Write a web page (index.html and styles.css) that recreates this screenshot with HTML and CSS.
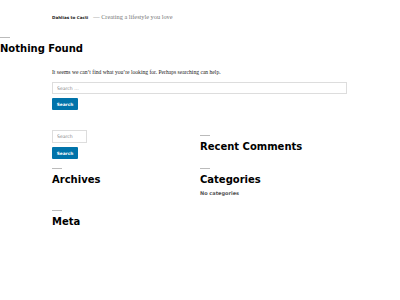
FILE: index.html
```html
<!DOCTYPE html>
<html lang="en">
<head>
    <meta charset="UTF-8">
    <meta name="viewport" content="width=device-width, initial-scale=1.0">
    <title>Dahlias to Cacti</title>
    <link rel="stylesheet" href="styles.css">
</head>
<body>
    <header class="site-header">
        <span class="site-title">Dahlias to Cacti</span>
        <span class="site-desc">— Creating a lifestyle you love</span>
    </header>

    <main class="site-main">
        <div class="rule"></div>
        <h1 class="page-title">Nothing Found</h1>

        <div class="page-content">
            <p>It seems we can’t find what you’re looking for. Perhaps searching can help.</p>
            <form class="search-form">
                <input type="search" class="search-field" placeholder="Search …">
                <button type="button" class="search-submit">Search</button>
            </form>
        </div>
    </main>

    <aside class="widget-area">
        <div class="widget-column">
            <form class="search-form widget-search">
                <input type="search" class="search-field small" placeholder="Search …">
                <button type="button" class="search-submit">Search</button>
            </form>

            <section class="widget widget-archives">
                <div class="rule"></div>
                <h2 class="widget-title">Archives</h2>
            </section>

            <section class="widget widget-meta">
                <div class="rule"></div>
                <h2 class="widget-title">Meta</h2>
            </section>
        </div>

        <div class="widget-column">
            <section class="widget widget-comments">
                <div class="rule"></div>
                <h2 class="widget-title">Recent Comments</h2>
            </section>

            <section class="widget widget-categories">
                <div class="rule"></div>
                <h2 class="widget-title">Categories</h2>
                <div class="widget-empty">No categories</div>
            </section>
        </div>
    </aside>
</body>
</html>
```

FILE: styles.css
```css
body {
    margin: 0;
    background: #fff;
    color: #111;
    font-family: "Liberation Serif", serif;
}

.site-header {
    padding: 9px 52px 0;
    height: 10px;
    line-height: 10px;
    white-space: nowrap;
}

.site-title {
    font-family: "DejaVu Sans", sans-serif;
    font-weight: bold;
    font-size: 4.1px;
    color: #222;
}

.site-desc {
    margin-left: 1px;
    font-size: 6.3px;
    color: #777;
}

.site-main {
    margin-top: 18px;
}

.rule {
    width: 10px;
    height: 1px;
    background: #bbb;
}

.page-title {
    margin: 5px 0 0;
    font-family: "DejaVu Sans", sans-serif;
    font-weight: bold;
    font-size: 10px;
    line-height: 12px;
    color: #000;
}

.page-content {
    padding: 0 52px;
    margin-top: 13px;
}

.page-content p {
    margin: 0;
    font-size: 5.6px;
    line-height: 8px;
    color: #222;
}

.search-form {
    display: flex;
    flex-direction: column;
    align-items: flex-start;
    gap: 4px;
    margin-top: 6px;
}

.search-field {
    box-sizing: border-box;
    width: 295px;
    height: 12px;
    margin: 0;
    padding: 0 4px;
    border: 1px solid #ddd;
    font-family: "DejaVu Sans", sans-serif;
    font-size: 4.6px;
    color: #555;
    background: #fff;
    outline: none;
}

.search-field::placeholder {
    color: #888;
}

.search-field.small {
    width: 35px;
    height: 13px;
}

.search-submit {
    box-sizing: border-box;
    width: 26px;
    height: 12px;
    padding: 0;
    border: none;
    border-radius: 1px;
    background: #0073aa;
    color: #fff;
    font-family: "DejaVu Sans", sans-serif;
    font-weight: bold;
    font-size: 4.3px;
    cursor: pointer;
}

.widget-area {
    display: flex;
    padding: 0 52px;
    margin-top: 20px;
}

.widget-column {
    width: 148px;
    display: flex;
    flex-direction: column;
}

.widget-search {
    margin-top: 0;
}

.widget-title {
    margin: 5px 0 0;
    font-family: "DejaVu Sans", sans-serif;
    font-weight: bold;
    font-size: 10px;
    line-height: 12px;
    color: #000;
}

.widget-archives {
    margin-top: 9px;
}

.widget-meta {
    margin-top: 24px;
}

.widget-comments {
    margin-top: 5px;
}

.widget-categories {
    margin-top: 15px;
}

.widget-empty {
    margin-top: 4px;
    font-family: "DejaVu Sans", sans-serif;
    font-weight: bold;
    font-size: 5px;
    line-height: 6px;
    color: #555;
}
```
